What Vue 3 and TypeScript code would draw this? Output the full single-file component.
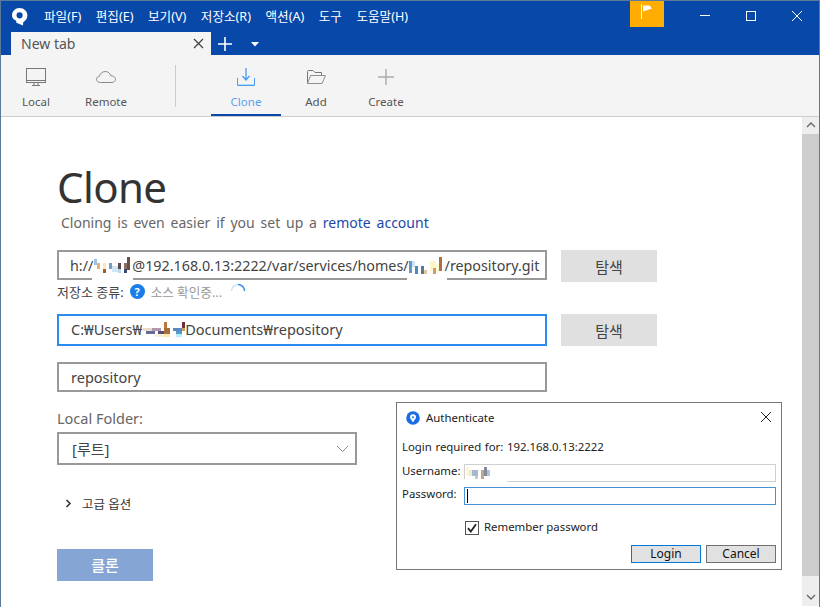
<script setup lang="ts">
type Cell = [number, number, number, number, string]
const menus = ['파일(F)', '편집(E)', '보기(V)', '저장소(R)', '액션(A)', '도구', '도움말(H)']
const mosaicA: Cell[] = [
  [0, 3, 3, 6, '#9cc4e0'], [3, 7, 3, 6, '#e8b070'], [9, 7, 3, 6, '#ffe9b8'], [9, 13, 3, 4, '#a0622c'],
  [15, 7, 3, 6, '#7a9cc0'], [18, 10, 6, 6, '#cfe6f5'], [24, 7, 3, 6, '#5a4a50'], [24, 13, 3, 4, '#b8d8ec'],
  [30, 7, 3, 6, '#8a7060'], [33, 1, 3, 13, '#6a5040'], [30, 13, 3, 4, '#3e4a70']
]
const mosaicB: Cell[] = [
  [0, 5, 3, 12, '#5e9ad0'], [3, 5, 3, 6, '#cfe2f2'], [6, 10, 3, 8, '#4e88c0'], [12, 10, 3, 8, '#5a7898'],
  [15, 14, 3, 4, '#e8c890'], [21, 5, 6, 10, '#fff4c8'], [24, 12, 3, 6, '#c8a070'], [30, 1, 3, 14, '#b07040'],
  [27, 8, 3, 8, '#fffbd8']
]
const mosaicC: Cell[] = [
  [0, 8, 9, 3, '#e8dcc8'], [3, 11, 9, 3, '#6a6a98'], [9, 8, 9, 3, '#b098b0'], [15, 11, 6, 3, '#5a4f80'],
  [21, 2, 3, 6, '#b87840'], [21, 8, 6, 6, '#a87038'], [21, 14, 6, 3, '#ffe8b0'], [12, 14, 9, 3, '#f8f0d8'],
  [30, 8, 9, 3, '#5a88c0'], [33, 11, 6, 3, '#5a98c8'], [33, 14, 6, 3, '#b8ecf8'], [39, 2, 3, 6, '#703040'],
  [39, 8, 3, 3, '#c8a070']
]
const mosaicD: Cell[] = [
  [0, 2, 3, 9, '#fff4d8'], [3, 5, 3, 6, '#e0f0e0'], [6, 5, 6, 6, '#a8b8c8'], [9, 11, 3, 3, '#c0c8d0'],
  [15, 5, 3, 9, '#c0a880'], [18, 2, 3, 9, '#8888a0'], [21, 5, 3, 6, '#a8c8e0']
]
</script>

<template>
  <div class="window">
    <header class="titlebar">
      <div class="menu-row">
        <svg class="logo" width="20" height="20" viewBox="0 0 20 20">
          <path fill="#fff" fill-rule="evenodd" d="M9.500 1C14 1 17.400 4.300 17.400 8.600C17.400 11.800 15.400 14 13.200 15.200L13 18.500L6.400 15.800C6.400 14.500 6.300 13.800 5.500 13.300C3.300 12 2 10.500 2 8.400C2 4.300 5.300 1 9.500 1ZM9.600 5.200A3.100 3.100 0 1 0 9.600 11.400A3.100 3.100 0 1 0 9.600 5.200Z" />
        </svg>
        <nav class="menus">
          <span v-for="m in menus" :key="m">{{ m }}</span>
        </nav>
        <div class="flag">
          <svg width="14" height="16" viewBox="0 0 14 16">
            <path d="M1.500 0V15" stroke="#fff" fill="none" />
            <path d="M3 1.500H9.500L12 4.500L3 7.500Z" fill="#fff" />
          </svg>
        </div>
        <div class="win-btns">
          <svg width="12" height="12" viewBox="0 0 12 12"><path d="M1 5.500H11" stroke="#fff" fill="none" /></svg>
          <svg width="12" height="12" viewBox="0 0 12 12"><rect x="1.500" y="1.500" width="9" height="9" stroke="#fff" fill="none" /></svg>
          <svg width="12" height="12" viewBox="0 0 12 12"><path d="M1 1L11 11M11 1L1 11" stroke="#fff" fill="none" /></svg>
        </div>
      </div>
      <div class="tab-row">
        <div class="tab">
          <span>New tab</span>
          <svg width="11" height="11" viewBox="0 0 11 11"><path d="M1 1L10 10M10 1L1 10" stroke="#444" stroke-width="1.300" fill="none" /></svg>
        </div>
        <svg class="plus" width="16" height="16" viewBox="0 0 16 16"><path d="M8 1V15M1 8H15" stroke="#fff" stroke-width="1.600" fill="none" /></svg>
        <svg class="caret" width="8" height="5" viewBox="0 0 8 5"><path d="M0 0H8L4 4.500Z" fill="#fff" /></svg>
      </div>
    </header>

    <div class="toolbar">
      <div class="tool">
        <svg width="22" height="20" viewBox="0 0 22 20" fill="none" stroke="#777">
          <rect x="1.500" y="1.500" width="19" height="14" />
          <path d="M1.500 13.500H20.500M9 15.500V18M13 15.500V18M7 18.500H15" />
        </svg>
        <span>Local</span>
      </div>
      <div class="tool">
        <svg width="22" height="20" viewBox="0 0 22 20" fill="none" stroke="#8a8a8a">
          <path d="M5.500 15.500C3 15.500 1.500 14 1.500 12.300C1.500 10.500 3 9.300 4.500 9.300C5 6.500 7.500 4.500 10.300 4.500C13 4.500 15.200 6.300 15.800 8.700C18 8.700 20.500 10 20.500 12.300C20.500 14 19 15.500 17 15.500Z" />
        </svg>
        <span>Remote</span>
      </div>
      <div class="sep"></div>
      <div class="tool active">
        <svg width="22" height="20" viewBox="0 0 22 20" fill="none" stroke="#4a9cf5">
          <path d="M2.500 11V18.500H19.500V11" />
          <path d="M11 1V12M7.500 9L11 13L14.500 9" stroke-width="1.300" />
          <path d="M3 17.500H19" stroke="#b9d9fb" />
        </svg>
        <span>Clone</span>
      </div>
      <div class="tool">
        <svg width="22" height="20" viewBox="0 0 22 20" fill="none" stroke="#777">
          <path d="M2.500 16.500V4.500C2.500 3.800 3 3.500 3.500 3.500H8L10 5.500H16.500V8" />
          <path d="M2.500 16.500L5.500 8.500H20.500L17 16.500Z" stroke="#8f8f8f" />
        </svg>
        <span>Add</span>
      </div>
      <div class="tool">
        <svg width="22" height="20" viewBox="0 0 22 20" fill="none" stroke="#aaa" stroke-width="1.400">
          <path d="M11 2V18M3 10H19" />
        </svg>
        <span>Create</span>
      </div>
    </div>

    <div class="body">
      <main class="content">
        <h1>Clone</h1>
        <p class="lead">Cloning is even easier if you set up a <a>remote account</a></p>

        <div class="row">
          <div class="field first">
            <span>h://</span>
            <span class="blur blur-a">
              <svg width="37" height="18" viewBox="0 0 37 18"><rect v-for="(c, i) in mosaicA" :key="i" :x="c[0]" :y="c[1]" :width="c[2]" :height="c[3]" :fill="c[4]" /></svg>
              <i class="patch"></i>
            </span>
            <span>@192.168.0.13:2222/var/services/homes/</span>
            <span class="blur">
              <svg width="36" height="18" viewBox="0 0 36 18"><rect v-for="(c, i) in mosaicB" :key="i" :x="c[0]" :y="c[1]" :width="c[2]" :height="c[3]" :fill="c[4]" /></svg>
              <i class="patch"></i>
            </span>
            <span>/repository.git</span>
          </div>
          <button class="browse">탐색</button>
        </div>
        <div class="status">
          <span>저장소 종류:</span>
          <span class="help">?</span>
          <span class="muted">소스 확인중...</span>
          <svg class="spin" width="16" height="16" viewBox="0 0 16 16" fill="none">
            <path d="M1.500 8A6.500 6.500 0 0 1 8 1.500" stroke="#cfe3f8" stroke-width="1.500" />
            <path d="M8 1.500A6.500 6.500 0 0 1 14.500 8" stroke="#3b8fe8" stroke-width="1.500" />
          </svg>
        </div>

        <div class="row second">
          <div class="field focus">
            <span>C:₩Users₩</span>
            <span class="blur blur-c">
              <svg width="42" height="18" viewBox="0 0 42 18"><rect v-for="(c, i) in mosaicC" :key="i" :x="c[0]" :y="c[1]" :width="c[2]" :height="c[3]" :fill="c[4]" /></svg>
            </span>
            <span>Documents₩repository</span>
          </div>
          <button class="browse">탐색</button>
        </div>

        <div class="field third"><span>repository</span></div>

        <label class="folder-label">Local Folder:</label>
        <div class="select">
          <span>[루트]</span>
          <svg width="13" height="8" viewBox="0 0 13 8" fill="none"><path d="M1 1L6.500 6.500L12 1" stroke="#888" /></svg>
        </div>

        <div class="advanced">
          <svg width="7" height="9" viewBox="0 0 7 9" fill="none"><path d="M1.500 1L5 4.500L1.500 8" stroke="#333" stroke-width="1.600" /></svg>
          <span>고급 옵션</span>
        </div>

        <button class="clone-btn">클론</button>
      </main>

      <aside class="scrollbar">
        <div class="arrow up">
          <svg width="10" height="6" viewBox="0 0 10 6" fill="none"><path d="M1 5L5 1L9 5" stroke="#666" stroke-width="1.300" /></svg>
        </div>
        <div class="thumb"></div>
        <div class="arrow down">
          <svg width="10" height="6" viewBox="0 0 10 6" fill="none"><path d="M1 1L5 5L9 1" stroke="#666" stroke-width="1.300" /></svg>
        </div>
      </aside>
    </div>

    <section class="dialog">
      <div class="dlg-title">
        <svg width="14" height="14" viewBox="0 0 14 14">
          <circle cx="7" cy="7" r="6.800" fill="#1a6fe0" />
          <path fill="#fff" fill-rule="evenodd" d="M7 3.200A3 3 0 0 1 10 6.200C10 8 8 9 7.600 10.800H6.400C6 9 4 8 4 6.200A3 3 0 0 1 7 3.200ZM7 5.200A1 1 0 1 0 7 7.200A1 1 0 1 0 7 5.200Z" />
        </svg>
        <span>Authenticate</span>
        <svg class="dlg-close" width="12" height="12" viewBox="0 0 12 12"><path d="M1 1L11 11M11 1L1 11" stroke="#222" fill="none" /></svg>
      </div>
      <p class="dlg-msg">Login required for: 192.168.0.13:2222</p>
      <div class="dlg-row">
        <span class="dlg-label">Username:</span>
        <div class="dlg-input">
          <svg class="dlg-blur" width="30" height="16" viewBox="0 0 30 16"><rect v-for="(c, i) in mosaicD" :key="i" :x="c[0]" :y="c[1]" :width="c[2]" :height="c[3]" :fill="c[4]" /></svg>
          <i class="dlg-patch"></i>
        </div>
      </div>
      <div class="dlg-row pw">
        <span class="dlg-label">Password:</span>
        <div class="dlg-input focus"><i class="cursor"></i></div>
      </div>
      <div class="remember">
        <svg width="14" height="14" viewBox="0 0 14 14" fill="none">
          <rect x="0.500" y="0.500" width="13" height="13" stroke="#555" fill="#fff" />
          <path d="M3 7.200L5.800 10.500L11 3.300" stroke="#222" stroke-width="1.800" />
        </svg>
        <span class="remember-text">Remember password</span>
      </div>
      <div class="dlg-actions">
        <button class="dlg-btn primary">Login</button>
        <button class="dlg-btn">Cancel</button>
      </div>
    </section>
  </div>
</template>

<style scoped>
.window {
  position: relative;
  box-sizing: border-box;
  width: 820px;
  height: 607px;
  display: flex;
  flex-direction: column;
  overflow: hidden;
  background: #fff;
  border: 1px solid #5b7a99;
  border-bottom: 0;
  font-family: "Noto Sans", "Noto Sans CJK KR", sans-serif;
  color: #333;
}
.titlebar {
  height: 54px;
  flex: none;
  background: #0848a8;
  display: flex;
  flex-direction: column;
}
.menu-row {
  height: 31px;
  display: flex;
  align-items: flex-start;
}
.logo {
  margin: 6px 0 0 9px;
}
.menus {
  display: flex;
  gap: 14.500px;
  margin: 7px 0 0 14px;
  color: #fff;
  font-size: 12.600px;
  line-height: 18px;
  width: 586px;
}
.flag {
  width: 34px;
  height: 26px;
  background: #ffad00;
  display: flex;
  align-items: center;
  justify-content: center;
  padding-bottom: 4px;
  box-sizing: border-box;
}
.win-btns {
  display: flex;
  gap: 34px;
  margin: 9px 0 0 35px;
}
.tab-row {
  height: 23px;
  display: flex;
  align-items: center;
}
.tab {
  box-sizing: border-box;
  width: 200px;
  height: 23px;
  margin-left: 10px;
  padding: 0 7px 0 10px;
  display: flex;
  align-items: center;
  justify-content: space-between;
  background: #f4f4f4;
  color: #555;
  font-size: 14px;
}
.plus {
  margin-left: 6px;
}
.caret {
  margin: 2px 0 0 18px;
}
.toolbar {
  height: 61px;
  flex: none;
  display: flex;
  background: #f4f4f4;
  border-bottom: 1px solid #cccccc;
}
.tool {
  box-sizing: border-box;
  width: 70px;
  height: 61px;
  padding-top: 12px;
  display: flex;
  flex-direction: column;
  align-items: center;
  font-size: 11.500px;
  line-height: 16px;
  color: #555;
  gap: 7px;
}
.tool.active {
  color: #5aa0f0;
  border-bottom: 2px solid #0848a8;
}
.sep {
  width: 1px;
  height: 42px;
  margin: 10px 35px 0 34px;
  background: #ccc;
}
.body {
  flex: 1;
  min-height: 0;
  display: flex;
}
.content {
  flex: 1;
  padding: 45px 0 0 56px;
}
h1 {
  margin: 0;
  font-size: 42px;
  font-weight: 400;
  line-height: 50px;
  color: #333;
  letter-spacing: -0.600px;
}
.lead {
  margin: 1px 0 0 4px;
  font-size: 14px;
  line-height: 20px;
  color: #666;
  word-spacing: 2.200px;
}
.lead a {
  color: #1b48a8;
}
.row {
  display: flex;
  gap: 14px;
  align-items: flex-start;
  margin-top: 17px;
}
.field {
  box-sizing: border-box;
  width: 490px;
  border: 2px solid #999;
  display: flex;
  align-items: center;
  padding-left: 12px;
  font-size: 14.500px;
  color: #444;
  white-space: nowrap;
}
.first {
  height: 30px;
  padding-left: 11px;
  font-size: 14.300px;
}
.focus {
  height: 32px;
  padding-bottom: 2px;
  border-color: #2a8cf0;
}
.third {
  height: 30px;
  margin-top: 16px;
}
.blur {
  position: relative;
  display: inline-flex;
  flex: none;
}
.blur-a {
  margin: 0 1px;
}
.blur-c {
  margin-left: 1px;
}
.patch {
  position: absolute;
  left: -2px;
  right: -2px;
  bottom: -8px;
  height: 6px;
  background: #fff;
}
.browse {
  width: 96px;
  height: 32px;
  border: 0;
  padding: 0;
  background: #e0e0e0;
  color: #444;
  font-family: inherit;
  font-size: 15px;
}
.status {
  display: flex;
  align-items: center;
  height: 18px;
  font-size: 13px;
  color: #444;
}
.help {
  width: 15px;
  height: 15px;
  margin-left: 6px;
  border-radius: 50%;
  background: #1a7de8;
  color: #fff;
  font-size: 11px;
  font-weight: 700;
  text-align: center;
  line-height: 15px;
}
.muted {
  margin-left: 6px;
  font-size: 12.600px;
  color: #999;
}
.spin {
  margin-left: 8px;
}
.second {
  margin-top: 14px;
}
.folder-label {
  display: block;
  margin-top: 16px;
  font-size: 14.500px;
  line-height: 20px;
  color: #666;
}
.select {
  box-sizing: border-box;
  width: 300px;
  height: 33px;
  margin-top: 4px;
  border: 2px solid #999;
  display: flex;
  align-items: center;
  justify-content: space-between;
  padding: 0 6px 0 13px;
  font-size: 15px;
  color: #444;
}
.advanced {
  display: flex;
  align-items: center;
  gap: 10px;
  margin: 29px 0 0 8px;
  height: 18px;
  font-size: 12.500px;
  color: #333;
}
.clone-btn {
  display: block;
  width: 96px;
  height: 32px;
  margin-top: 37px;
  border: 0;
  padding: 0 0 2px;
  background: #85a5d4;
  color: #fff;
  font-family: inherit;
  font-size: 15px;
  font-weight: 500;
}
.scrollbar {
  width: 17px;
  flex: none;
  display: flex;
  flex-direction: column;
  margin-bottom: 1px;
}
.arrow {
  background: #eeeeee;
  display: flex;
  justify-content: center;
}
.up {
  height: 17px;
  padding-top: 5px;
  box-sizing: border-box;
}
.down {
  height: 30px;
  align-items: flex-end;
  padding-bottom: 6px;
  box-sizing: border-box;
}
.thumb {
  flex: 1;
  background: #cdcdcd;
}
.dialog {
  position: absolute;
  left: 395px;
  top: 401px;
  box-sizing: border-box;
  width: 386px;
  height: 168px;
  background: #fff;
  border: 1px solid #777;
  padding: 0 5px;
  font-size: 11.400px;
  color: #222;
}
.dlg-title {
  position: relative;
  display: flex;
  align-items: center;
  gap: 6px;
  height: 29px;
  padding: 0 0 0 4px;
}
.dlg-close {
  position: absolute;
  right: 4px;
  top: 8px;
}
.dlg-msg {
  margin: 6px 0 0;
  line-height: 18px;
  word-spacing: 0.600px;
}
.dlg-row {
  display: flex;
  align-items: center;
  margin-top: 8px;
}
.dlg-row.pw {
  margin-top: 5px;
}
.dlg-label {
  width: 62px;
  flex: none;
  line-height: 14px;
  padding-bottom: 4px;
}
.dlg-input {
  position: relative;
  box-sizing: border-box;
  width: 312px;
  height: 18px;
  border: 1px solid #cfcfcf;
}
.dlg-input.focus {
  height: 18px;
  padding-bottom: 0;
  border-color: #4a90d9;
}
.dlg-blur {
  position: absolute;
  left: 1px;
  top: 0;
}
.dlg-patch {
  position: absolute;
  left: -1px;
  bottom: -1px;
  width: 43px;
  height: 3px;
  background: #fff;
}
.cursor {
  position: absolute;
  left: 2px;
  top: 1px;
  width: 1px;
  height: 14px;
  background: #000;
}
.remember {
  display: flex;
  align-items: center;
  gap: 5px;
  margin: 16px 0 0 63px;
  height: 14px;
}
.remember-text {
  line-height: 14px;
  padding-bottom: 2px;
}
.dlg-actions {
  display: flex;
  justify-content: flex-end;
  gap: 5px;
  margin-top: 10px;
}
.dlg-btn {
  box-sizing: border-box;
  width: 70px;
  height: 18px;
  padding: 0;
  border: 1px solid #707070;
  background: #e1e1e1;
  color: #111;
  font-family: inherit;
  font-size: 12px;
  line-height: 14px;
}
.dlg-btn.primary {
  border-color: #0078d7;
}
</style>
